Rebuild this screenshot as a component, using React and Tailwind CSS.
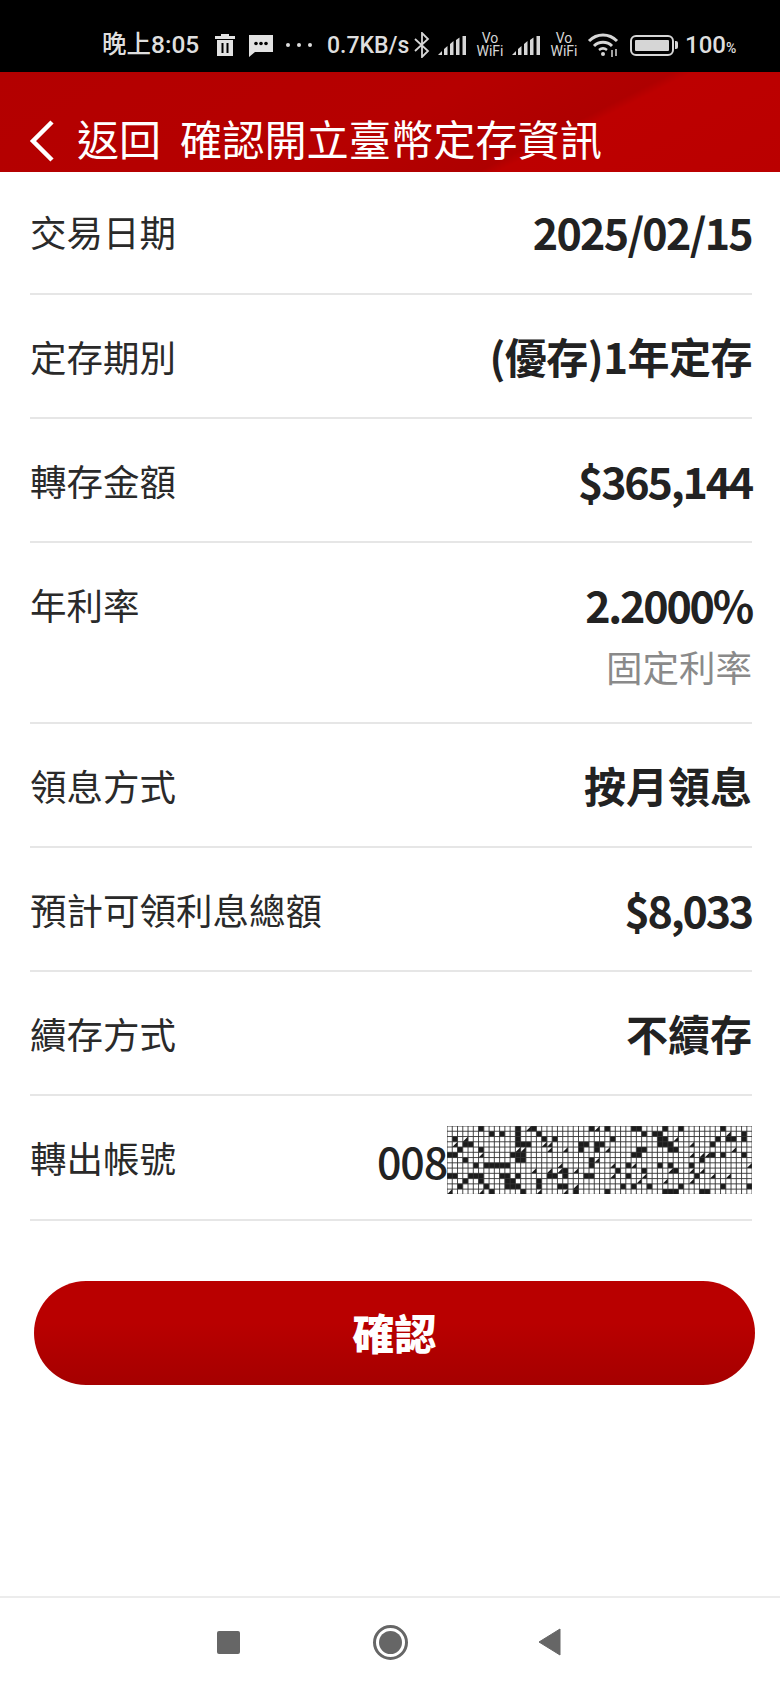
const cjk = "font-['Noto_Sans_CJK_TC','Noto_Sans',sans-serif]";

const rows = [
  { label: "交易日期", value: "2025/02/15", track: "tracking-[-1.700px] text-[43px]" },
  { label: "定存期別", value: "(優存)1年定存", track: "tracking-[-0.500px] text-[42px]" },
  { label: "轉存金額", value: "$365,144", track: "tracking-[-2.200px] text-[43px]" },
  { label: "年利率", value: "2.2000%", note: "固定利率", track: "tracking-[-2.200px] text-[43px]" },
  { label: "領息方式", value: "按月領息", track: "text-[42px]" },
  { label: "預計可領利息總額", value: "$8,033", track: "tracking-[-2.200px] text-[43px]" },
  { label: "續存方式", value: "不續存", track: "text-[42px]" },
];

// masked account number: fixed noise over a thin grid
function MaskedDigits() {
  const cell = 5.26;
  const cols = 58;
  const gridRows = 13;
  const shapes = [];
  let seed = 41;
  for (let r = 0; r < gridRows; r++) {
    for (let c = 0; c < cols; c++) {
      seed = (seed * 1103515245 + 12345) % 2147483648;
      const roll = (seed >> 8) % 100;
      const x = c * cell;
      const y = r * cell;
      if (roll < 11) {
        shapes.push(`M${x} ${y}h${cell}v${cell}h-${cell}z`);
      } else if (roll < 15) {
        shapes.push(`M${x} ${y}h${cell * 2}v${cell}h-${cell * 2}z`);
      } else if (roll < 21) {
        shapes.push(`M${x} ${y + cell}l${cell} -${cell}v${cell}z`);
      }
    }
  }
  const lines = [];
  for (let c = 0; c <= cols; c++) lines.push(`M${c * cell} 0V68`);
  for (let r = 0; r <= gridRows; r++) lines.push(`M0 ${r * cell}H${cols * cell}`);
  return (
    <svg width="305" height="68" viewBox="0 0 305 68" className="block shrink-0">
      <path d={shapes.join("")} fill="#1c1c1c" />
      <path d={lines.join("")} stroke="#333" strokeWidth="0.9" fill="none" />
    </svg>
  );
}

function Signal() {
  return (
    <svg width="30" height="22" viewBox="0 0 30 22" fill="#d6d6d6">
      <path d="M0 21l4-4v4zM6 15l3.500-3v9H6zM12 10l3.500-3v14H12zM18 6l3.500-2.500V21H18zM24.500 2H28v19h-3.500z" />
    </svg>
  );
}

function VoWifi() {
  return (
    <div className="flex w-[28px] flex-col items-center text-[14px] leading-[13px] text-[#d6d6d6] font-['Roboto',sans-serif]">
      <span>Vo</span>
      <span>WiFi</span>
    </div>
  );
}

function StatusBar() {
  return (
    <div className="flex h-[72px] items-center bg-black pl-[102px] pt-[18px] text-[#dedede] font-['Roboto','Noto_Sans_CJK_TC',sans-serif]">
      <span className="w-[99px] whitespace-nowrap text-[24.500px] font-medium leading-none">晚上8:05</span>
      <svg width="20" height="22" viewBox="0 0 20 22" fill="#e2e2e2" className="ml-[14px]">
        <path d="M6 0h8v2h6v3H0V2h6zM2 6h16v16H2zM6.500 9v10h2V9zM11.500 9v10h2V9z" fillRule="evenodd" />
      </svg>
      <svg width="26" height="24" viewBox="0 0 26 24" className="ml-[13px]">
        <path d="M1 2h24v17H7l-6 5z" fill="#e2e2e2" />
        <circle cx="8" cy="10.500" r="1.800" fill="#000" />
        <circle cx="13" cy="10.500" r="1.800" fill="#000" />
        <circle cx="18" cy="10.500" r="1.800" fill="#000" />
      </svg>
      <div className="ml-[12px] flex w-[26px] justify-between">
        <span className="size-[4px] rounded-full bg-[#dedede]" />
        <span className="size-[4px] rounded-full bg-[#dedede]" />
        <span className="size-[4px] rounded-full bg-[#dedede]" />
      </div>
      <span className="ml-[15px] w-[84px] text-[23px] font-medium leading-none">0.7KB/s</span>
      <svg width="16" height="26" viewBox="0 0 16 26" fill="none" stroke="#d6d6d6" strokeWidth="1.800" className="ml-[3px]">
        <path d="M1 7l13 12-6 6V1l6 6L1 19" />
      </svg>
      <div className="ml-[8px]"><Signal /></div>
      <div className="ml-[8px]"><VoWifi /></div>
      <div className="ml-[8px]"><Signal /></div>
      <div className="ml-[8px]"><VoWifi /></div>
      <svg width="32" height="26" viewBox="0 0 32 26" fill="none" stroke="#d6d6d6" className="ml-[9px]">
        <path d="M2 9C10 1 22 1 30 9" strokeWidth="3" />
        <path d="M7 14c5-5 13-5 18 0" strokeWidth="3" />
        <path d="M12 18c2.500-2 5.500-2 8 0" strokeWidth="2.500" />
        <circle cx="16" cy="22" r="2" fill="#d6d6d6" stroke="none" />
        <path d="M25 18v7M29 17v7" strokeWidth="1.500" />
      </svg>
      <div className="ml-[11px] flex items-center">
        <div className="h-[21px] w-[44px] rounded-[6px] border-[2.500px] border-[#d6d6d6] p-[3px]">
          <div className="size-full rounded-[1px] bg-[#d6d6d6]" />
        </div>
        <div className="ml-[1px] h-[8px] w-[3px] rounded-r-[2px] bg-[#d6d6d6]" />
      </div>
      <span className="ml-[7px] text-[24px] font-medium leading-none">100</span>
      <span className="mb-[17px] self-end text-[14px] font-medium leading-none">%</span>
    </div>
  );
}

export default function App() {
  return (
    <div className={`flex h-[1690px] w-[780px] flex-col overflow-hidden bg-white ${cjk}`}>
      <StatusBar />

      <div className="flex h-[100px] items-end bg-[linear-gradient(153deg,#b30000_0%,#b60000_50%,#ae0000_69%,#bd0000_71%,#ba0000_100%)] pb-[5px] text-white">
        <svg width="26" height="42" viewBox="0 0 26 42" fill="none" stroke="#fff" strokeWidth="4.500" className="mb-[5px] ml-[29px]">
          <path d="M23 2L4 21l19 19" />
        </svg>
        <span className="ml-[22px] text-[42px] leading-[58px]">返回</span>
        <span className="ml-[19px] text-[42.200px] leading-[58px]">確認開立臺幣定存資訊</span>
      </div>

      <div className="pl-[30px] pr-[28px]">
        {rows.map((row) => (
          <div
            key={row.label}
            className={`flex items-start justify-between border-b-2 border-[#e6e6e6] pt-[32px] first:h-[123px] first:pt-[30px] ${row.note ? "h-[181px]" : "h-[124px]"}`}
          >
            <span className="mt-[4px] text-[36.500px] leading-[52px] text-[#2a2a2a]">{row.label}</span>
            <div className="mt-[1px] flex flex-col items-end">
              <span className={`font-bold leading-[56px] text-[#222] ${row.track}`}>{row.value}</span>
              {row.note && <span className="mt-[9px] text-[36.500px] leading-[52px] text-[#8a8a8a]">{row.note}</span>}
            </div>
          </div>
        ))}
        <div className="flex h-[125px] items-start justify-between border-b-2 border-[#e6e6e6] pt-[30px]">
          <span className="mt-[6px] text-[36.500px] leading-[52px] text-[#2a2a2a]">轉出帳號</span>
          <div className="flex items-center">
            <span className="text-[43px] font-medium leading-[56px] tracking-[-1.200px] text-[#222]">008</span>
            <MaskedDigits />
          </div>
        </div>
      </div>

      <button className="ml-[34px] mr-[25px] mt-[60px] h-[104px] rounded-[52px] bg-gradient-to-b from-[#b90000] from-40% to-[#a50000] pb-[4px] text-[42px] font-black text-white">
        確認
      </button>

      <div className="mt-auto flex h-[94px] items-center border-t-2 border-[#ececec] pb-[4px] pl-[217px]">
        <div className="size-[23px] rounded-[2px] bg-[#666]" />
        <div className="ml-[133px] flex size-[35px] items-center justify-center rounded-full border-[3px] border-[#666]">
          <div className="size-[23px] rounded-full bg-[#666]" />
        </div>
        <svg width="23" height="28" viewBox="0 0 23 28" fill="#666" className="ml-[130px]">
          <path d="M22 1v26L1 14z" stroke="#666" strokeLinejoin="round" />
        </svg>
      </div>
    </div>
  );
}
